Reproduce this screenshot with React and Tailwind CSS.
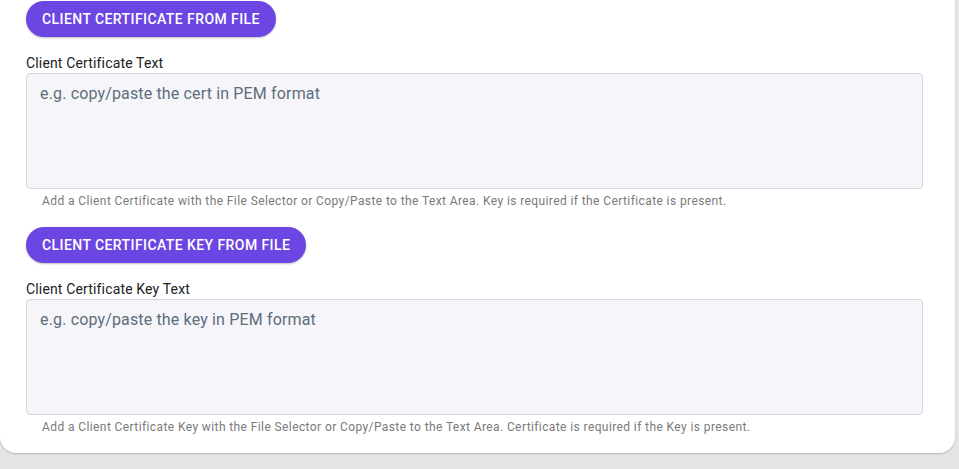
import React, { useState } from 'react';

const CertField = ({ buttonLabel, label, placeholder, helper, value, onChange }) => {
  return (
    <div className="flex flex-col">
      <div>
        <button
          type="button"
          className="h-9 px-4 rounded-full bg-[#6c46e2] text-white text-sm font-medium uppercase tracking-[0.03em] shadow-[0_1px_2px_rgba(0,0,0,0.25)]"
        >
          {buttonLabel}
        </button>
      </div>

      <label className="mt-4 text-sm leading-5 tracking-[0.011em] text-[#212121]">{label}</label>
      <textarea
        value={value}
        onChange={onChange}
        placeholder={placeholder}
        className="h-[116px] w-[897px] resize-none rounded border border-[#d7d7df] bg-[#f5f5fa] px-[13px] py-2 text-base leading-6 tracking-[0.0094em] text-[#212121] placeholder:text-[#5d6d7c] outline-none"
      />
      <p className="mt-1 pl-4 text-xs leading-4 tracking-[0.0333em] text-[#7a7a7a]">{helper}</p>
    </div>
  );
};

const App = () => {
  const [cert, setCert] = useState('');
  const [certKey, setCertKey] = useState('');

  return (
    <div className="min-h-[469px] bg-[#e5e5e5] font-['Roboto','Liberation_Sans',sans-serif]">
      <div className="w-[955px] bg-white rounded-b-2xl shadow-[0_1px_2px_rgba(0,0,0,0.2)] pl-[26px] pt-px pb-[18px]">
        <CertField
          buttonLabel="Client Certificate From File"
          label="Client Certificate Text"
          placeholder="e.g. copy/paste the cert in PEM format"
          helper="Add a Client Certificate with the File Selector or Copy/Paste to the Text Area. Key is required if the Certificate is present."
          value={cert}
          onChange={(e) => setCert(e.target.value)}
        />

        <div className="mt-[18px]">
          <CertField
            buttonLabel="Client Certificate Key From File"
            label="Client Certificate Key Text"
            placeholder="e.g. copy/paste the key in PEM format"
            helper="Add a Client Certificate Key with the File Selector or Copy/Paste to the Text Area. Certificate is required if the Key is present."
            value={certKey}
            onChange={(e) => setCertKey(e.target.value)}
          />
        </div>
      </div>
    </div>
  );
};

export default App;
